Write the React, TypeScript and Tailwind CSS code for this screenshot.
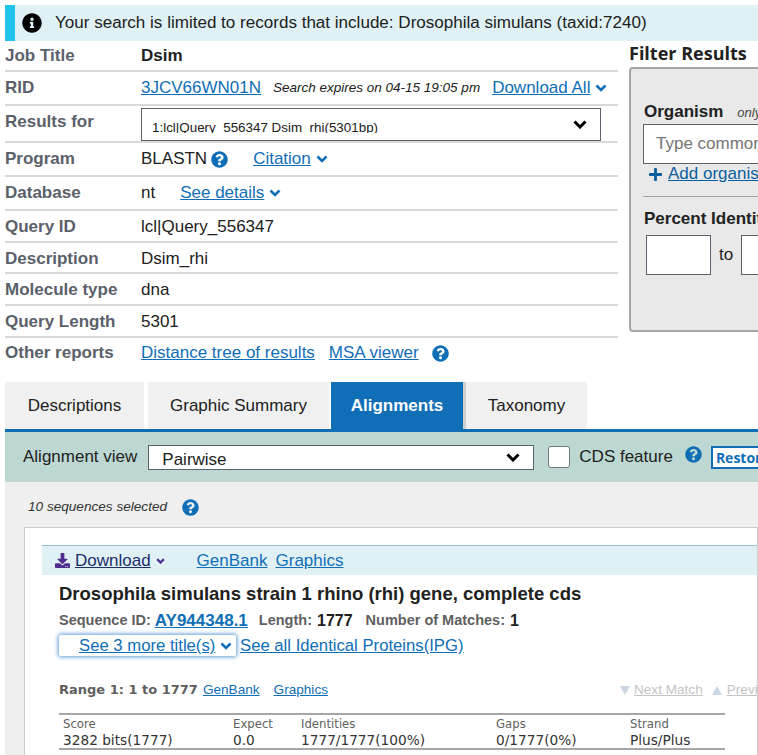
import { FaDownload, FaInfoCircle, FaPlus, FaQuestionCircle } from "react-icons/fa";
import type { ReactNode } from "react";

const sans = "font-['Liberation_Sans',Arial,sans-serif]";

const Help = ({ className = "" }: { className?: string }) => (
  <FaQuestionCircle className={`inline-block shrink-0 text-[17px] text-[#106eb6] ${className}`} />
);

const Chevron = ({ className = "" }: { className?: string }) => (
  <svg viewBox="0 0 12 8" className={`h-[8px] w-[12px] shrink-0 fill-none stroke-[#106eb6] stroke-[2.6] ${className}`}>
    <path d="M1.5 1.5 6 6l4.5-4.5" />
  </svg>
);

const BlackChevron = () => (
  <svg viewBox="0 0 14 9" className="h-[9px] w-[14px] shrink-0 fill-none stroke-black stroke-[3]">
    <path d="M1.5 1.5 7 7l5.5-5.5" />
  </svg>
);

const Tri = ({ up }: { up?: boolean }) => (
  <svg viewBox="0 0 10 9" className="h-[9px] w-[10px] shrink-0 fill-[#c9d6e2]">
    <path d={up ? "M5 0l5 9H0z" : "M0 0h10L5 9z"} />
  </svg>
);

const A = ({ children, className = "" }: { children: ReactNode; className?: string }) => (
  <a className={`text-[#106eb6] underline ${className}`}>{children}</a>
);

const Row = ({ label, h, last, children }: { label: string; h: string; last?: boolean; children: ReactNode }) => (
  <div className={`flex items-center ${h} ${last ? "" : "border-b-2 border-[#d9d9d9]"}`}>
    <div className="w-[136px] shrink-0 font-bold text-[#5b616b]">{label}</div>
    <div className="flex min-w-0 flex-1 items-center text-[#212121]">{children}</div>
  </div>
);

const stats = [
  { head: "Score", value: "3282 bits(1777)", w: "w-[170px]" },
  { head: "Expect", value: "0.0", w: "w-[68px]" },
  { head: "Identities", value: "1777/1777(100%)", w: "w-[195px]" },
  { head: "Gaps", value: "0/1777(0%)", w: "w-[134px]" },
  { head: "Strand", value: "Plus/Plus", w: "w-[95px]" },
];

export default function App() {
  return (
    <div className={`h-[755px] w-[758px] overflow-hidden bg-white pt-[5px] pl-[5px] text-[17px] ${sans}`}>
      {/* Alert */}
      <div className="flex h-[36px] items-center border-l-[10px] border-[#20c4ec] bg-[#e0f1f6] pl-[7px] text-[17.06px] whitespace-nowrap text-[#212121]">
        <FaInfoCircle className="mr-[13px] text-[20px] text-black" />
        <span>Your search is limited to records that include: Drosophila simulans (taxid:7240)</span>
      </div>

      <div className="flex">
        {/* Job summary */}
        <div className="w-[613px] shrink-0">
          <Row label="Job Title" h="h-[31px]">
            <span className="font-bold">Dsim</span>
          </Row>
          <Row label="RID" h="h-[34px]">
            <A>3JCV66WN01N</A>
            <span className="ml-[12px] text-[13.5px] whitespace-nowrap italic">Search expires on 04-15 19:05 pm</span>
            <A className="ml-[12px] whitespace-nowrap">Download All</A>
            <Chevron className="ml-[5px]" />
          </Row>
          <div className="flex h-[37px] border-b-2 border-[#d9d9d9]">
            <div className="w-[136px] shrink-0 pt-[3px] font-bold text-[#5b616b]">Results for</div>
            <div className="mt-[2px] flex h-[33px] w-[460px] justify-between border border-[#5b616b] pl-[10px] pr-[13px] text-[#212121]">
              <span className="mt-[11px] h-[13px] overflow-hidden text-[13.4px] leading-[15px] whitespace-nowrap">
                1:lcl|Query_556347 Dsim_rhi(5301bp)
              </span>
              <div className="mt-[11px]">
                <BlackChevron />
              </div>
            </div>
          </div>
          <Row label="Program" h="h-[34px]">
            <span>BLASTN</span>
            <Help className="ml-[4px]" />
            <A className="ml-[25px]">Citation</A>
            <Chevron className="ml-[5px]" />
          </Row>
          <Row label="Database" h="h-[34px]">
            <span>nt</span>
            <A className="ml-[25px] whitespace-nowrap">See details</A>
            <Chevron className="ml-[5px]" />
          </Row>
          <Row label="Query ID" h="h-[32px] pt-[2px]">lcl|Query_556347</Row>
          <Row label="Description" h="h-[31px] pt-[2px]">Dsim_rhi</Row>
          <Row label="Molecule type" h="h-[32px] pt-[2px]">dna</Row>
          <Row label="Query Length" h="h-[32px] pt-[2px]">5301</Row>
          <Row label="Other reports" h="h-[30px]" last>
            <A className="whitespace-nowrap">Distance tree of results</A>
            <A className="ml-[14px] whitespace-nowrap">MSA viewer</A>
            <Help className="ml-[13px]" />
          </Row>
        </div>

        {/* Filter panel */}
        <div className="ml-[11px] w-[200px] shrink-0">
          <div className="-mt-[1px] h-[27px] font-['Open_Sans',sans-serif] text-[18px] leading-[27px] font-bold whitespace-nowrap text-[#212121]">
            Filter Results
          </div>
          <div className="h-[265px] rounded-[4px] border-2 border-[#a6a6a6] bg-[#e9e9e9] pt-[33px] pl-[12px]">
            <div className="flex items-baseline pl-[1px] leading-[20px] whitespace-nowrap">
              <span className="font-bold text-[#212121]">Organism</span>
              <span className="ml-[14px] text-[13px] text-[#444] italic">only top 20 taxa</span>
            </div>
            <div className="mt-[1px] flex h-[40px] items-center border border-[#5b616b] bg-white pl-[12px] whitespace-nowrap text-[#757575]">
              Type common name
            </div>
            <div className="flex h-[20px] items-center pl-[5px] whitespace-nowrap">
              <FaPlus className="shrink-0 text-[15px] text-[#0b5e9e]" />
              <a className="ml-[5px] text-[#0b5e9e] underline">Add organism</a>
            </div>
            <div className="mt-[12px] border-t border-[#a6a6a6] pt-[12px] pl-[1px] leading-[20px] font-bold whitespace-nowrap text-[#212121]">
              Percent Identity
            </div>
            <div className="mt-[6px] ml-[3px] flex items-center text-[#212121]">
              <div className="h-[40px] w-[65px] shrink-0 border border-[#5b616b] bg-white" />
              <span className="mx-[8px]">to</span>
              <div className="h-[40px] w-[65px] shrink-0 border border-[#5b616b] bg-white" />
            </div>
          </div>
        </div>
      </div>

      {/* Tabs */}
      <div className="mt-[14px] flex items-end">
        <div className="flex h-[47px] w-[139px] items-center justify-center bg-[#f0f0f0] text-[#212121]">Descriptions</div>
        <div className="ml-[4px] flex h-[47px] w-[181px] items-center justify-center bg-[#f0f0f0] text-[#212121]">Graphic Summary</div>
        <div className="ml-[2px] flex h-[47px] w-[132px] items-center justify-center bg-[#106eb6] font-bold text-white">Alignments</div>
        <div className="flex h-[47px] w-[124px] items-center justify-center border-l-[3px] border-[#cfcfcf] bg-[#f0f0f0] text-[#212121]">Taxonomy</div>
      </div>
      <div className="h-[3px] bg-[#106eb6]" />

      {/* Toolbar */}
      <div className="flex h-[50px] items-center bg-[#bdd8d3] pl-[18px] whitespace-nowrap text-[#212121]">
        <span>Alignment view</span>
        <div className="ml-[11px] flex h-[25px] w-[386px] shrink-0 items-center justify-between border border-[#5b616b] bg-white pr-[13px] pl-[13px]">
          <span className="mt-[5px] leading-[20px]">Pairwise</span>
          <BlackChevron />
        </div>
        <div className="ml-[14px] h-[22px] w-[22px] shrink-0 rounded-[3px] border border-[#767676] bg-white" />
        <span className="ml-[9px]">CDS feature</span>
        <Help className="-mt-[6px] ml-[12px]" />
        <div className="ml-[9px] flex h-[23px] w-[80px] shrink-0 items-center border-2 border-[#106eb6] bg-white pl-[3px] font-['Open_Sans',sans-serif] text-[14px] font-bold text-[#106eb6]">
          Restore
        </div>
      </div>

      {/* Results */}
      <div className="h-[273px] bg-[#efefef] pt-[16px] pl-[19px]">
        <div className="flex h-[18px] items-center pl-[4px] text-[13.6px] text-[#333] italic">
          10 sequences selected
          <Help className="ml-[15px]" />
        </div>
        <div className="mt-[11px] h-[240px] border border-[#cccccc] bg-white pt-[17px] pl-[17px]">
          <div className="flex h-[30px] items-center border-t border-[#9dbcd8] bg-[#e0f1f6] pl-[13px] whitespace-nowrap">
            <FaDownload className="shrink-0 text-[15px] text-[#4f2d8f]" />
            <a className="ml-[5px] text-[#1c2f6b] underline">Download</a>
            <svg viewBox="0 0 12 8" className="ml-[5px] h-[6px] w-[9px] shrink-0 fill-none stroke-[#4f2d8f] stroke-[3]">
              <path d="M1.5 1.5 6 6l4.5-4.5" />
            </svg>
            <A className="ml-[32px]">GenBank</A>
            <A className="ml-[8px]">Graphics</A>
          </div>
          <div className="pl-[17px]">
            <div className="mt-[7px] text-[18.5px] leading-[24px] font-bold whitespace-nowrap text-[#212121]">
              Drosophila simulans strain 1 rhino (rhi) gene, complete cds
            </div>
            <div className="mt-[4px] flex h-[22px] items-center text-[14.5px] font-bold whitespace-nowrap text-[#5f5f5f]">
              Sequence ID:
              <A className="ml-[4px] text-[17px]">AY944348.1</A>
              <span className="ml-[11px]">Length:</span>
              <span className="ml-[5px] text-[16px] text-[#212121]">1777</span>
              <span className="ml-[13px]">Number of Matches:</span>
              <span className="ml-[5px] text-[16px] text-[#212121]">1</span>
            </div>
            <div className="mt-[3px] flex h-[21px] items-center text-[16.7px] whitespace-nowrap">
              <div className="flex h-[21px] w-[177px] shrink-0 items-center rounded-[2px] bg-white pl-[20px] shadow-[0_0_4px_1px_#5b9bd5]">
                <A>See 3 more title(s)</A>
                <Chevron className="ml-[5px]" />
              </div>
              <A className="ml-[4px]">See all Identical Proteins(IPG)</A>
            </div>
            <div className="mt-[25px] flex h-[18px] items-center text-[13.6px] whitespace-nowrap">
              <span className="font-['DejaVu_Sans',sans-serif] text-[13px] font-bold text-[#5f5f5f]">Range 1: 1 to 1777</span>
              <A className="ml-[5px]">GenBank</A>
              <A className="ml-[14px]">Graphics</A>
              <span className="ml-[292px]">
                <Tri />
              </span>
              <span className="ml-[4px] text-[#c4c4c4] underline">Next Match</span>
              <span className="ml-[9px]">
                <Tri up />
              </span>
              <span className="ml-[5px] text-[#c4c4c4] underline">Previous Match</span>
            </div>
            <div className="mt-[14px] flex h-[37px] w-[666px] flex-none border-y-2 border-[#a6a6a6] pl-[4px] font-['DejaVu_Sans',sans-serif] text-[13.7px] whitespace-nowrap text-[#333]">
              {stats.map((s) => (
                <div key={s.head} className={`${s.w} shrink-0`}>
                  <div className="text-[11.7px] leading-[18px] text-[#5f5f5f]">{s.head}</div>
                  <div className="leading-[15px]">{s.value}</div>
                </div>
              ))}
            </div>
          </div>
        </div>
      </div>
    </div>
  );
}
